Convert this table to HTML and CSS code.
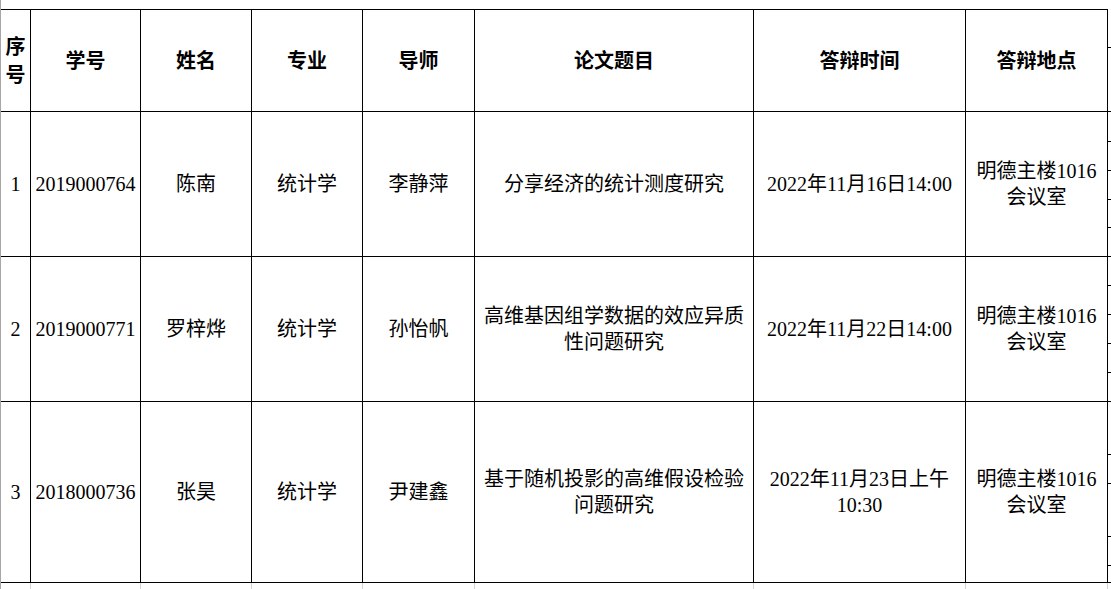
FILE: index.html
```html
<!DOCTYPE html>
<html lang="zh-CN">
<head>
<meta charset="utf-8">
<title>答辩安排</title>
<link rel="stylesheet" href="styles.css">
</head>
<body>
<div class="sheet">
  <div class="edge"></div>
  <div class="main">
    <div class="grid">
      <div class="cell head narrow">序号</div>
      <div class="cell head">学号</div>
      <div class="cell head">姓名</div>
      <div class="cell head">专业</div>
      <div class="cell head">导师</div>
      <div class="cell head">论文题目</div>
      <div class="cell head">答辩时间</div>
      <div class="cell head">答辩地点</div>

      <div class="cell r1">1</div>
      <div class="cell r1">2019000764</div>
      <div class="cell r1">陈南</div>
      <div class="cell r1">统计学</div>
      <div class="cell r1">李静萍</div>
      <div class="cell r1">分享经济的统计测度研究</div>
      <div class="cell r1">2022年11月16日14:00</div>
      <div class="cell r1">明德主楼1016<br>会议室</div>

      <div class="cell r2">2</div>
      <div class="cell r2">2019000771</div>
      <div class="cell r2">罗梓烨</div>
      <div class="cell r2">统计学</div>
      <div class="cell r2">孙怡帆</div>
      <div class="cell r2">高维基因组学数据的效应异质<br>性问题研究</div>
      <div class="cell r2">2022年11月22日14:00</div>
      <div class="cell r2">明德主楼1016<br>会议室</div>

      <div class="cell r3">3</div>
      <div class="cell r3">2018000736</div>
      <div class="cell r3">张昊</div>
      <div class="cell r3">统计学</div>
      <div class="cell r3">尹建鑫</div>
      <div class="cell r3">基于随机投影的高维假设检验<br>问题研究</div>
      <div class="cell r3">2022年11月23日上午<br>10:30</div>
      <div class="cell r3">明德主楼1016<br>会议室</div>

      <div class="ghost"></div>
      <div class="ghost"></div>
      <div class="ghost"></div>
      <div class="ghost"></div>
      <div class="ghost"></div>
      <div class="ghost"></div>
      <div class="ghost"></div>
      <div class="ghost"></div>
    </div>
  </div>
  <div class="strip">
    <div class="tick t48 line"></div>
    <div class="tick t64 line"></div>
    <div class="tick t30 line"></div>
    <div class="tick t29 line"></div>
    <div class="tick t29 line"></div>
    <div class="tick t28 line"></div>
    <div class="tick t29 line"></div>
    <div class="tick t29 line"></div>
    <div class="tick t29 line"></div>
    <div class="tick t29 line"></div>
    <div class="tick t29 line"></div>
    <div class="tick t29 line"></div>
    <div class="tick t53 line"></div>
    <div class="tick t29 line"></div>
    <div class="tick t53 line"></div>
    <div class="tick t29 line"></div>
    <div class="tick t17 line"></div>
  </div>
</div>
</body>
</html>
```

FILE: styles.css
```css
html, body {
  margin: 0;
  padding: 0;
  background: #ffffff;
}

body {
  width: 1111px;
  height: 589px;
  overflow: hidden;
  font-family: "Liberation Serif", "Noto Sans CJK SC", serif;
  font-size: 20px;
  color: #000000;
}

.sheet {
  display: flex;
  height: 589px;
}

.edge {
  width: 1px;
  flex: none;
  background: #a6a6a6;
}

.main {
  flex: none;
  width: 1107px;
  padding-top: 9px;
}

.grid {
  display: grid;
  grid-template-columns: 30px 110px 111px 111px 112px 279px 212px 142px;
  grid-template-rows: 102px 145px 145px 181px 8px;
  border-top: 1px solid #000;
}

.cell {
  box-sizing: border-box;
  border-right: 1px solid #000;
  border-bottom: 1px solid #000;
  display: flex;
  align-items: center;
  justify-content: center;
  text-align: center;
  line-height: 26px;
  white-space: nowrap;
}

.head {
  font-weight: bold;
}

.narrow {
  white-space: normal;
  line-height: 28px;
  padding: 0 4px;
}

.ghost {
  box-sizing: border-box;
  border-right: 1px solid #d4d4d4;
}

.strip {
  flex: none;
  width: 3px;
  display: flex;
  flex-direction: column;
}

.tick {
  box-sizing: border-box;
  flex: none;
}

.line {
  border-bottom: 1px solid #000;
}

.t17 { height: 17px; }
.t28 { height: 28px; }
.t29 { height: 29px; }
.t30 { height: 30px; }
.t48 { height: 48px; }
.t53 { height: 53px; }
.t64 { height: 64px; }
```
